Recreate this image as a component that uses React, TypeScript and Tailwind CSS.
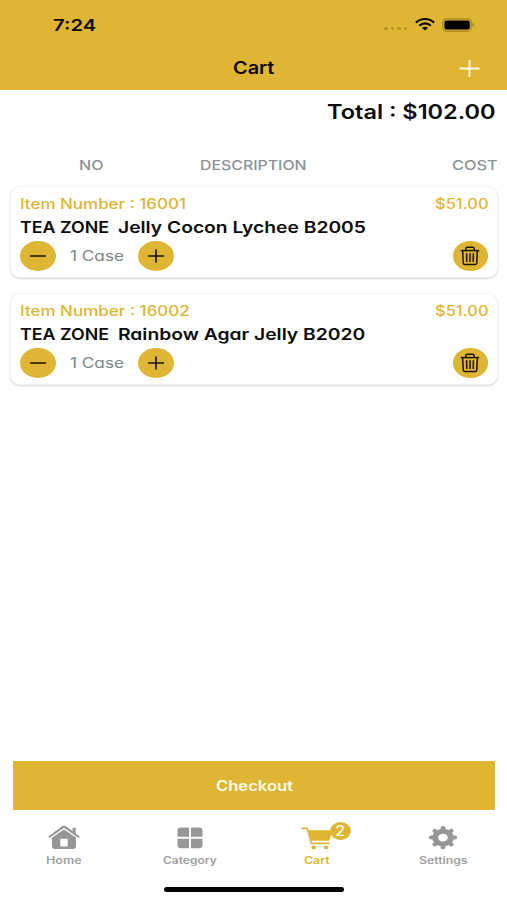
import React, { useLayoutEffect, useRef, useState } from "react";
import clsx from "clsx";

type CartItem = {
  id: string;
  brand: string;
  name: string;
  cost: string;
  nameWidth: string;
  numberWidth: string;
};

const items: CartItem[] = [
  {
    id: "16001",
    brand: "TEA ZONE  ",
    name: "Jelly Cocon Lychee B2005",
    cost: "$51.00",
    nameWidth: "w-[248px]",
    numberWidth: "w-[166px]",
  },
  {
    id: "16002",
    brand: "TEA ZONE  ",
    name: "Rainbow Agar Jelly B2020",
    cost: "$51.00",
    nameWidth: "w-[247px]",
    numberWidth: "w-[170px]",
  },
];

// One line of text, stretched sideways to fill the width of its box
const WideText = ({
  children,
  className,
}: {
  children: string;
  className?: string;
}) => {
  const box = useRef<HTMLDivElement>(null);
  const text = useRef<HTMLSpanElement>(null);
  const [scale, setScale] = useState(1);

  useLayoutEffect(() => {
    if (box.current && text.current) {
      setScale(box.current.clientWidth / text.current.offsetWidth);
    }
  }, [children]);

  return (
    <div ref={box} className={clsx("shrink-0 whitespace-pre", className)}>
      <span
        ref={text}
        className="inline-block origin-left"
        style={{ transform: `scaleX(${scale})` }}
      >
        {children}
      </span>
    </div>
  );
};

const WifiIcon = () => (
  <svg className="w-[20px] h-[13px]" viewBox="0 0 20 13" fill="none" stroke="#0d0a00">
    <path d="M1 4.6C6 -0.2 14 -0.2 19 4.6" strokeWidth="2.2" />
    <path d="M4.2 7.7C7.5 4.6 12.5 4.6 15.8 7.7" strokeWidth="2.1" />
    <path d="M7 9.9C8.7 8.3 11.3 8.3 13 9.9L10 12.6Z" fill="#0d0a00" stroke="none" />
  </svg>
);

const BatteryIcon = () => (
  <svg className="w-[34px] h-[14px]" viewBox="0 0 34 14">
    <rect x="0.7" y="0.9" width="28.6" height="12.2" rx="3.6" fill="none" stroke="#a78520" strokeWidth="1.2" />
    <rect x="2.4" y="2.4" width="25.4" height="9.2" rx="2" fill="#000" />
    <path d="M30.5 4.8C32.6 5.4 32.6 8.6 30.5 9.2Z" fill="#a78520" />
  </svg>
);

const PlusMinus = ({ plus }: { plus?: boolean }) => (
  <button className="flex h-[30px] w-[35.5px] shrink-0 items-center justify-center rounded-[50%] bg-[#dfb534]">
    <svg className="w-[18px] h-[14px]" viewBox="0 0 18 14" stroke="#1c1600" strokeWidth="1.5">
      <path d="M1 7H17" />
      {plus && <path d="M9 0.5V13.5" strokeWidth="1.7" />}
    </svg>
  </button>
);

const TrashButton = () => (
  <button className="ml-auto flex h-[30px] w-[35.5px] items-center justify-center rounded-[50%] bg-[#dfb534]">
    <svg className="w-[20px] h-[20px]" viewBox="0 0 20 20" fill="none" stroke="#1c1600" strokeWidth="1.5" strokeLinejoin="round">
      <path d="M0.8 4.6H19.2" />
      <path d="M5.8 4.4V2.8Q5.8 1.3 7.4 1.3H12.6Q14.2 1.3 14.2 2.8V4.4" />
      <path d="M2.6 4.6L3.3 17.2Q3.4 18.6 4.9 18.6H15.1Q16.6 18.6 16.7 17.2L17.4 4.6" />
      <path d="M6.6 7.2L6.8 16M10 7.2V16M13.4 7.2L13.2 16" />
    </svg>
  </button>
);

const HomeIcon = () => (
  <svg className="w-[32px] h-[25px]" viewBox="0 0 32 25" fill="#979797">
    <path d="M0.6 11.2L14.8 0.8Q16 0 17.2 0.8L24.6 6V2.7H27.7V8.4L31.4 11.2Q32 11.8 31.4 12.3Q30.6 13 29.8 12.4L16 2.7L2.2 12.4Q1.4 13 0.6 12.3Q0 11.8 0.6 11.2Z" />
    <path fillRule="evenodd" d="M16 4.5L28 12.6V21.6Q28 24 25.5 24H6.5Q4 24 4 21.6V12.6ZM12.3 13.8V21.6H19.7V13.8Z" />
  </svg>
);

const CategoryIcon = () => (
  <svg className="w-[26px] h-[25px]" viewBox="0 0 26 25" fill="#979797">
    <path d="M4 2.5H12V11.7H0.5V5.5Q0.5 2.5 4 2.5Z" />
    <path d="M14 2.5H22Q25.5 2.5 25.5 5.5V11.7H14Z" />
    <path d="M0.5 13.7H12V23.2H4Q0.5 23.2 0.5 20.2Z" />
    <path d="M14 13.7H25.5V20.2Q25.5 23.2 22 23.2H14Z" />
  </svg>
);

const CartIcon = () => (
  <svg className="w-[32px] h-[25px]" viewBox="0 0 32 25" fill="#dfb534">
    <path d="M1.2 3.4H6.2L10.2 18.4H27.8" fill="none" stroke="#dfb534" strokeWidth="1.6" strokeLinecap="round" strokeLinejoin="round" />
    <path d="M7.2 5.2H31L29 14.2Q28.8 15.6 27.5 15.7H9.8Z" />
    <ellipse cx="12.7" cy="22.4" rx="2.3" ry="1.9" />
    <ellipse cx="25" cy="22.4" rx="2.3" ry="1.9" />
  </svg>
);

const SettingsIcon = () => (
  <svg className="w-[30px] h-[25px]" viewBox="0 0 30 25" fill="none" stroke="#979797">
    <g transform="translate(15 12.6) scale(1.22 1)">
      <circle r="6.4" strokeWidth="4.9" />
      <path
        d="M0 -9.6V-7M0 9.6V7M-9.6 0H-7M9.6 0H7M-6.7 -6.7L-5 -5M6.7 -6.7L5 -5M-6.7 6.7L-5 5M6.7 6.7L5 5"
        strokeWidth="4"
        strokeLinecap="round"
      />
    </g>
  </svg>
);

const CartCard = ({ item }: { item: CartItem }) => (
  <div className="h-[92px] rounded-[10px] border border-[#f3f3f3] bg-white px-[9px] pt-[5px] shadow-[0_1px_2px_rgba(0,0,0,0.18)] [font-feature-settings:'cv11']">
    <div className="flex h-6 items-center justify-between text-[14px] leading-6 font-medium text-[#dfb534]">
      <WideText className={item.numberWidth}>{`Item Number : ${item.id}`}</WideText>
      <WideText className="w-[53px]">{item.cost}</WideText>
    </div>
    <div className="flex h-[25px] text-[16px] leading-[23px] font-semibold text-[#0c0c0c]">
      <WideText className="w-[97.5px]">{item.brand}</WideText>
      <WideText className={item.nameWidth}>{item.name}</WideText>
    </div>
    <div className="flex items-center">
      <PlusMinus />
      <WideText className="ml-3.5 mr-[15px] w-[53.5px] text-[14px] leading-[30px] text-[#7d8388]">1 Case</WideText>
      <PlusMinus plus />
      <TrashButton />
    </div>
  </div>
);

const Tab = ({
  icon,
  label,
  width,
  active,
}: {
  icon: React.ReactNode;
  label: string;
  width: string;
  active?: boolean;
}) => (
  <div className="flex w-[126.5px] flex-col items-center">
    <div className="relative flex h-[25px]">
      {icon}
      {active && (
        <span className="absolute -top-[3px] left-[29px] flex h-[18px] w-[21px] items-center justify-center rounded-[50%] bg-[#dfb534] text-[14px] leading-[18px] text-white">
          <span className="scale-x-115">2</span>
        </span>
      )}
    </div>
    <WideText
      className={clsx(
        "mt-[3px] text-[10px] leading-[14px] font-semibold",
        width,
        active ? "text-[#dfb534]" : "text-[#a0a0a0]",
      )}
    >
      {label}
    </WideText>
  </div>
);

const App = () => {
  return (
    <div className="flex h-[900px] w-[507px] flex-col overflow-hidden bg-white font-['Inter',sans-serif]">
      <header className="h-[90px] shrink-0 bg-[#dfb534] text-[#0d0a00]">
        <div className="flex h-[49px] items-center pl-[53px] pr-[31px]">
          <WideText className="w-[43px] text-[16px] leading-6 font-semibold">7:24</WideText>
          <div className="ml-auto flex items-center">
            <div className="mt-[8px] mr-2 flex gap-[3px]">
              {[0, 1, 2, 3].map((dot) => (
                <span key={dot} className="h-[3px] w-[3.5px] rounded-full bg-[#b8942a]" />
              ))}
            </div>
            <WifiIcon />
            <div className="ml-[7px]">
              <BatteryIcon />
            </div>
          </div>
        </div>
        <div className="flex h-[38px] items-center pl-[233px] pr-[27px]">
          <WideText className="w-[41px] text-[17px] leading-6 font-semibold">Cart</WideText>
          <svg className="ml-auto w-[21px] h-[17px]" viewBox="0 0 21 17" stroke="#fffbe8" strokeWidth="1.8">
            <path d="M0.5 8.5H20.5M10.5 0V17" />
          </svg>
        </div>
      </header>

      <div className="flex h-[44px] shrink-0 items-center justify-end pr-[12.5px]">
        <WideText className="w-[168px] text-[20px] leading-7 font-semibold text-[#0c0c0c]">Total : $102.00</WideText>
      </div>

      <div className="mt-[18px] flex h-[25px] shrink-0 items-center pl-[79px] pr-[9px] text-[13.5px] leading-6 font-medium text-[#8b9197]">
        <WideText className="w-[25px]">NO</WideText>
        <WideText className="ml-[96px] w-[107px]">DESCRIPTION</WideText>
        <WideText className="ml-auto w-[46px]">COST</WideText>
      </div>

      <main className="mt-[9px] flex flex-1 flex-col gap-[15px] pl-2.5 pr-[9px]">
        {items.map((item) => (
          <CartCard key={item.id} item={item} />
        ))}
      </main>

      <button className="mr-3 ml-[13px] flex h-[49px] shrink-0 items-center bg-[#dfb534] pl-[202.5px] text-left">
        <WideText className="w-[77px] text-[14px] leading-6 font-semibold text-[#fffbe8]">Checkout</WideText>
      </button>

      <nav className="flex h-[77px] shrink-0 pt-[15px] pl-[0.5px]">
        <Tab icon={<HomeIcon />} label="Home" width="w-[35px]" />
        <Tab icon={<CategoryIcon />} label="Category" width="w-[54px]" />
        <Tab icon={<CartIcon />} label="Cart" width="w-[26px]" active />
        <Tab icon={<SettingsIcon />} label="Settings" width="w-[49px]" />
      </nav>
      <div className="mr-[163px] mb-2 ml-[164px] h-[5px] shrink-0 rounded-full bg-black" />
    </div>
  );
};

export default App;
